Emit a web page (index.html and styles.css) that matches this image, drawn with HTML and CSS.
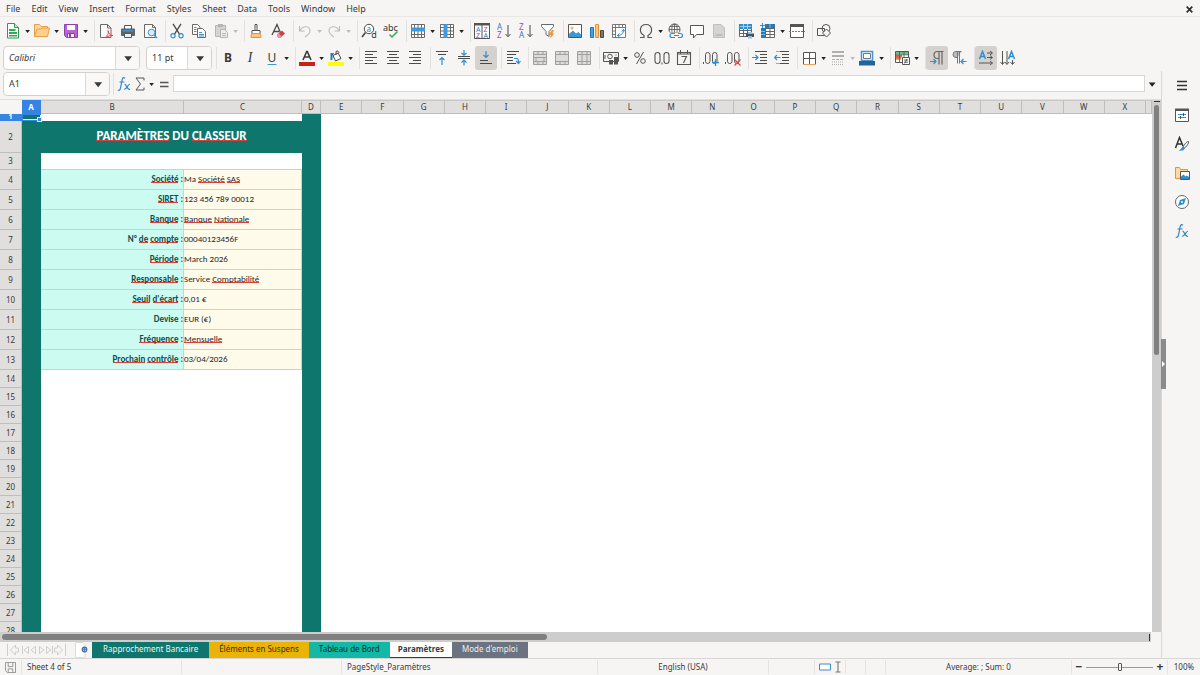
FILE: index.html
```html
<!DOCTYPE html>
<html lang="en">
<head>
<meta charset="utf-8">
<title>Classeur – Paramètres</title>
<meta name="viewport" content="width=device-width, initial-scale=1">
<link rel="stylesheet" href="styles.css">
</head>
<body>
<svg class="sprite" aria-hidden="true">
  <symbol id="drop" viewBox="0 0 7 16"><path d="M1.3 7h4.6L3.6 9.900z" fill="currentColor"/></symbol>
  <symbol id="new" viewBox="0 0 16 16"><path d="M2.500.5h7l4 4v10.500h-11z" fill="#fff" stroke="#2b9a4a"/><path d="M9.500.5v4h4" fill="#c9ecd0" stroke="#2b9a4a"/><path d="M4 6h6.500v2H4zM4 9h8v2H4zM4 12h8v1.500H4z" fill="#35a853"/></symbol>
  <symbol id="open" viewBox="0 0 16 16"><path d="M.5 13.500v-12h5l1.500 2h6.500v3" fill="#fbd9a2" stroke="#e8a04a"/><path d="M.5 13.500l2.500-7.500h4l1-1h7.500l-2 8.500z" fill="#fccf8d" stroke="#e8a04a"/></symbol>
  <symbol id="save" viewBox="0 0 16 16"><path d="M1.500 1.500h13v13h-11l-2-2z" fill="#b765cf" stroke="#913fad"/><path d="M4 2h8v5H4z" fill="#fff"/><path d="M4.500 10.500h7v4h-7z" fill="#fff" stroke="#913fad"/><path d="M6 11h2v3H6z" fill="#913fad"/></symbol>
  <symbol id="pdf" viewBox="0 0 16 16"><path d="M2.500 1.500h7l3.500 3.500v9.500H2.500z" fill="#fafafa" stroke="#6a6a68"/><path d="M9.500 1.500v3.500h3.500" fill="none" stroke="#6a6a68"/><path d="M7.500 14c3-2.500 3-4 2.500-6.500 1 3.500 2 5 5 5-3 0-5 .5-7.500 2" fill="none" stroke="#e0434f"/></symbol>
  <symbol id="print" viewBox="0 0 16 16"><path d="M4.500 2.500h7v4h-7z" fill="#fff" stroke="#555"/><rect x="1" y="5.500" width="14" height="7.500" rx="1" fill="#5c6268"/><path d="M2.500 7h11v1.500h-11z" fill="#4a90c8"/><path d="M4.500 10.500h7v4h-7z" fill="#eee" stroke="#555"/></symbol>
  <symbol id="preview" viewBox="0 0 16 16"><path d="M2.500 1.500h8l3 3v10h-11z" fill="#fafafa" stroke="#6a6a68"/><path d="M10.500 1.500v3h3" fill="none" stroke="#6a6a68"/><circle cx="9.500" cy="9.500" r="3.300" fill="#d7ecfa" stroke="#3d97d3"/><path d="M12 12l3 3" stroke="#3d97d3" stroke-width="1.500"/></symbol>
  <symbol id="cut" viewBox="0 0 16 16"><path d="M4 .8l6.500 10.400M12 .8L5.500 11.200" stroke="#4b4b49" stroke-width="1.300"/><circle cx="4" cy="12.700" r="2.100" fill="none" stroke="#2e8fd0" stroke-width="1.200"/><circle cx="12" cy="12.700" r="2.100" fill="none" stroke="#2e8fd0" stroke-width="1.200"/></symbol>
  <symbol id="copy" viewBox="0 0 16 16"><path d="M1.500 1.500h5l2.500 2.500v7.500H1.500z" fill="#fafafa" stroke="#6a6a68"/><path d="M6.500 5.500h5l3 3v6h-8z" fill="#fafafa" stroke="#6a6a68"/><path d="M3 4.500h2.500M3 6.500h2.500M3 8.500h2.500M8 9.500h3M8 11.500h5M8 13h5" stroke="#3d97d3"/></symbol>
  <symbol id="paste" viewBox="0 0 16 16"><path d="M2.500 2.500h10v11h-10z" fill="#d5d4d2" stroke="#b5b4b2"/><path d="M5 1h5v3H5z" fill="#b5b4b2"/><path d="M7.500 6.500h4l3 3v5h-7z" fill="#eee" stroke="#b5b4b2"/><path d="M9 10.500h4M9 12.500h4" stroke="#b5b4b2"/></symbol>
  <symbol id="brush" viewBox="0 0 16 16"><path d="M7 1.500h2v6H7z" fill="#fff" stroke="#555"/><path d="M4 7.500h8v3H4z" fill="#fff" stroke="#555"/><path d="M3.500 10.500h9l.5 4H3z" fill="#fbc67b" stroke="#e8932c"/></symbol>
  <symbol id="clear" viewBox="0 0 16 16"><path d="M2 12L7 1.500 11 11M4 8.500h5" fill="none" stroke="#4b4b49" stroke-width="1.300"/><path d="M7 11.500l5-4 3 3-5 4.500h-2z" fill="#dd3b4c"/><path d="M7 11.500l2-1.500 2.500 3.500-1.500 1.500H8z" fill="#f4919b"/></symbol>
  <symbol id="undo" viewBox="0 0 16 16"><path d="M2.500 3v5h5M3 7.500c3-5.500 10-4.500 10 .5 0 2.500-2 4-5 6" fill="none" stroke="#bdbcba" stroke-width="1.100"/></symbol>
  <symbol id="redo" viewBox="0 0 16 16"><path d="M13.500 3v5h-5M13 7.500c-3-5.500-10-4.500-10 .5 0 2.500 2 4 5 6" fill="none" stroke="#bdbcba" stroke-width="1.100"/></symbol>
  <symbol id="find" viewBox="0 0 16 16"><circle cx="8" cy="6" r="4.700" fill="#fff" stroke="#4b4b49"/><path d="M4.500 9.500L1 14" stroke="#4b4b49" stroke-width="1.700"/><text x="5.500" y="8.700" font-size="8" fill="#2380c4">a</text><text x="10.200" y="15" font-size="9" fill="#333">d</text></symbol>
  <symbol id="spell" viewBox="0 0 16 16"><text x="0" y="7.500" font-size="9" fill="#333">abc</text><path d="M6.500 11.500l2.500 2.500 5.500-5.500" fill="none" stroke="#2fae56" stroke-width="1.500"/></symbol>
  <symbol id="row" viewBox="0 0 16 16"><path d="M1.500 1.500h13v13h-13zM1.500 11.500h13M4.500 1v14M8 1v14M11.500 1v14" fill="#fff" stroke="#6a6a68"/><path d="M1 4.500h14v4H1z" fill="#3d9ae0"/></symbol>
  <symbol id="col" viewBox="0 0 16 16"><path d="M1.500 1.500h13v13h-13zM11.500 1v14M1 4.500h14M1 8h14M1 11.500h14" fill="#fff" stroke="#6a6a68"/><path d="M4.500 1h4v14h-4z" fill="#3d9ae0"/></symbol>
  <symbol id="sort" viewBox="0 0 16 16"><path d="M.5.5h15v15H.5zM8 1v14" fill="#fff" stroke="#555"/><path d="M0 0h16v2.500H0z" fill="#555"/><g font-size="7"><text x="2" y="8.500" fill="#2380c4">A</text><text x="2" y="15" fill="#a845bd">Z</text><text x="9.500" y="8.500" fill="#a845bd">Z</text><text x="9.500" y="15" fill="#2380c4">A</text></g></symbol>
  <symbol id="az" viewBox="0 0 16 16"><g font-size="8"><text x="1" y="7" fill="#2380c4">A</text><text x="1" y="15" fill="#a845bd">Z</text></g><path d="M12 2v11.500M9.500 11l2.500 2.700 2.500-2.700" fill="none" stroke="#4b4b49"/></symbol>
  <symbol id="za" viewBox="0 0 16 16"><g font-size="8"><text x="1" y="7" fill="#a845bd">Z</text><text x="1" y="15" fill="#2380c4">A</text></g><path d="M12 2v11.500M9.500 11l2.500 2.700 2.500-2.700" fill="none" stroke="#4b4b49"/></symbol>
  <symbol id="filter" viewBox="0 0 16 16"><path d="M1.500 1.500h12v2l-4.500 5v5l-3-2v-3l-4.500-5z" fill="#fff" stroke="#6a6a68"/><path d="M12 7l-3.500 5h2.500l-1.500 4 5-5.500h-2l1.500-3.500z" fill="#f0963a"/></symbol>
  <symbol id="image" viewBox="0 0 16 16"><path d="M1.500 1.500h13v13h-13z" fill="#fff" stroke="#555"/><path d="M2 14v-3l4-3.500 3 3 2.500-1.500 2.500 2.500v2.500z" fill="#3d97d3"/><circle cx="5" cy="5" r="1.500" fill="#f6b35b"/></symbol>
  <symbol id="chart" viewBox="0 0 16 16"><path d="M1.500 4.500h3v10h-3z" fill="#4a9fe0" stroke="#2277bb"/><path d="M6.500 1.500h3v13h-3z" fill="#fcc678" stroke="#e8932c"/><path d="M11.500 7.500h3v7h-3z" fill="#777" stroke="#4b4b49"/></symbol>
  <symbol id="pivot" viewBox="0 0 16 16"><path d="M1.500 1.500h13v13h-13zM1 4.500h14M4.500 1v14M8 1v3M11.500 1v3M1 8h3M1 11.500h3" fill="#fff" stroke="#777"/><path d="M6.500 12.500c4 0 6-2 6-6M8.500 10.500l-2 2 2 1.500M10.800 8.500l1.700-2 1.500 2" fill="none" stroke="#2e8fd0"/></symbol>
  <symbol id="omega" viewBox="0 0 16 16"><path d="M2 14.500h4v-2C.5 9.500 1.500 1.500 8 1.500s7.500 8 2 11v2h4" fill="none" stroke="#555" stroke-width="1.200"/></symbol>
  <symbol id="link" viewBox="0 0 16 16"><circle cx="7.500" cy="6.500" r="5.500" fill="none" stroke="#555"/><path d="M2 6.500h11M3 3.500h9M3 9.500h9M7.500 1v11" stroke="#555" stroke-width=".8"/><ellipse cx="7.500" cy="6.500" rx="2.700" ry="5.500" fill="none" stroke="#555" stroke-width=".8"/><path d="M2 9.500h14v6H2z" fill="#f6f5f4"/><path d="M8 10.500H5a2 2 0 0 0 0 4h3M11 10.500h2.500a2 2 0 0 1 0 4H11M7 12.500h5" fill="none" stroke="#2e8fd0" stroke-width="1.200"/></symbol>
  <symbol id="comment" viewBox="0 0 16 16"><path d="M1.500 2.500h13v9H7.500l-3 3.500v-3.500h-3z" fill="#fff" stroke="#555"/></symbol>
  <symbol id="headfoot" viewBox="0 0 16 16"><path d="M2.500 1.500h7.500l3.500 3.500v9.500h-11z" fill="#d5d4d2" stroke="#c0bfbd"/><path d="M4.500 12h7" stroke="#aaa"/></symbol>
  <symbol id="printarea" viewBox="0 0 16 16"><path d="M1.500 1.500h12v12h-12zM1 7.500h12M1 10.500h12M5.500 4v9M9.500 4v9" fill="#fff" stroke="#666"/><path d="M1 1h13v5H1z" fill="#2e8fd0"/><path d="M2 3.500h11M5.500 1v5M9.500 1v5" stroke="#9fd0f2"/><path d="M8 10.500h8v3.500H8z" fill="#4a5158"/><path d="M10 9h4v2h-4zM10 13h4v2.500h-4z" fill="#8fc3e8"/></symbol>
  <symbol id="freeze" viewBox="0 0 16 16"><path d="M1.500 1.500h13v13h-13zM5.500 1v14M10 1v14M1 5.500h14M1 8.500h14M1 11.500h14" fill="#fff" stroke="#666"/><path d="M5 1h10v4H5zM1 5h4v10H1z" fill="#2479bd"/><path d="M10 1v4M1 8.500h4M1 11.500h4" stroke="#7ebdec"/><path d="M0 0h5v5H0z" fill="#f6f5f4"/><path d="M2.500 0v5M0 2.500h5" stroke="#2e8fd0"/></symbol>
  <symbol id="split" viewBox="0 0 16 16"><path d="M1.500 2.500h13v12h-13z" fill="#fff" stroke="#555"/><path d="M1 1h14v3H1z" fill="#555"/><path d="M0 8.500h16" stroke="#2e8fd0" stroke-dasharray="2 1"/></symbol>
  <symbol id="shapes" viewBox="0 0 16 16"><path d="M1.500 5.500h7v7h-7z" fill="none" stroke="#555"/><circle cx="10" cy="5.500" r="4" fill="none" stroke="#555"/><path d="M10.500 6l4 4-4 4-4-4z" fill="#f6f5f4" stroke="#555"/></symbol>
  <symbol id="fontcolor" viewBox="0 0 16 16"><path d="M4 10L7.700 1.500h.6L12 10M5.500 7h5" fill="none" stroke="#3c3c3a" stroke-width="1.600"/><path d="M0 12h16v4H0z" fill="#c9211e"/></symbol>
  <symbol id="fill" viewBox="0 0 16 16"><path d="M5 5.500l5-2.500 3 5.500-5.500 2.500z" fill="#fff" stroke="#4b4b49"/><path d="M8 5V1.500c1.500-1.200 3 0 3 1.500" fill="none" stroke="#4b4b49"/><path d="M6 3H2.500v7.500l2-1V6z" fill="#2479bd"/><path d="M0 12h16v4H0z" fill="#ff0"/></symbol>
  <symbol id="aleft" viewBox="0 0 16 16"><path d="M2 1.500h12M2 4.500h8M2 7.500h12M2 10.500h8M2 13.500h12" stroke="#4b4b49"/></symbol>
  <symbol id="acenter" viewBox="0 0 16 16"><path d="M2 1.500h12M4 4.500h8M2 7.500h12M4 10.500h8M2 13.500h12" stroke="#4b4b49"/></symbol>
  <symbol id="aright" viewBox="0 0 16 16"><path d="M2 1.500h12M6 4.500h8M2 7.500h12M6 10.500h8M2 13.500h12" stroke="#4b4b49"/></symbol>
  <symbol id="vtop" viewBox="0 0 16 16"><path d="M2 1.500h12M4 4.500h8" stroke="#4b4b49"/><path d="M8 15V7.500M5.500 10L8 7.500l2.500 2.500" fill="none" stroke="#2e8fd0" stroke-width="1.200"/></symbol>
  <symbol id="vmid" viewBox="0 0 16 16"><path d="M2 6.500h12M2 8.500h12" stroke="#4b4b49"/><path d="M8 0v5M5.500 3L8 5.200 10.500 3M8 15.500v-5M5.500 12.500L8 10l2.500 2.500" fill="none" stroke="#2e8fd0" stroke-width="1.200"/></symbol>
  <symbol id="vbot" viewBox="0 0 16 16"><path d="M2 13.500h12M2 10.500h8" stroke="#4b4b49"/><path d="M8 1v6.500M5.500 5L8 7.500 10.500 5" fill="none" stroke="#2e8fd0" stroke-width="1.200"/></symbol>
  <symbol id="wrap" viewBox="0 0 16 16"><path d="M2 1.500h12M2 4.500h9M2 7.500h6M2 10.500h6M2 13.500h9" stroke="#4b4b49"/><path d="M9 8.500h3c1 0 1.500 1 1.500 4M11 11l2.500 2.500L15.500 11" fill="none" stroke="#2e8fd0" stroke-width="1.200"/></symbol>
  <symbol id="merge" viewBox="0 0 16 16"><path d="M1.500 1.500h13v13h-13zM1 4.500h14M1 7.500h14M1 11.500h14M6 1v3M11 1v3M4 8v3M12 8v3M6 12v3M11 12v3" fill="#dddcda" stroke="#a09f9d"/></symbol>
  <symbol id="mergecells" viewBox="0 0 16 16"><path d="M1.500 1.500h13v13h-13zM1 4.500h14M1 11.500h14M6 1v3M11 1v3M6 12v3M11 12v3" fill="#dddcda" stroke="#a09f9d"/></symbol>
  <symbol id="unmerge" viewBox="0 0 16 16"><path d="M1.500 1.500h13v13h-13zM1 4.500h14M1 11.500h14M6 1v14M11 1v14" fill="#dddcda" stroke="#a09f9d"/></symbol>
  <symbol id="currency" viewBox="0 0 16 16"><path d="M.5 2.500h15v9H.5z" fill="none" stroke="#555"/><circle cx="7" cy="6.500" r="2.300" fill="none" stroke="#555"/><path d="M6 10h4v4.500H6zM11 7h4v7.500h-4z" fill="#555"/><path d="M2 5v4M13 4.500v1" stroke="#555"/></symbol>
  <symbol id="percent" viewBox="0 0 16 16"><circle cx="5" cy="5" r="2.300" fill="none" stroke="#555"/><circle cx="11" cy="11" r="2.300" fill="none" stroke="#555"/><path d="M11.500 2L4.500 14" stroke="#555"/></symbol>
  <symbol id="number" viewBox="0 0 16 16"><rect x="1" y="2.500" width="5" height="11" rx="2.500" fill="none" stroke="#555" stroke-width="1.100"/><rect x="10" y="2.500" width="5" height="11" rx="2.500" fill="none" stroke="#555" stroke-width="1.100"/><path d="M8 12.500v2" stroke="#555"/></symbol>
  <symbol id="date" viewBox="0 0 16 16"><path d="M1.500 2.500h13v12h-13zM4.500 0v4M11.500 0v4M1 4h14M5.500 6.500h5l-3 6.500" fill="none" stroke="#555" stroke-width="1.100"/></symbol>
  <symbol id="decadd" viewBox="0 0 16 16"><path d="M.5 12v2" stroke="#555"/><rect x="2.500" y="2.500" width="4.500" height="11" rx="2.200" fill="none" stroke="#555"/><rect x="9.500" y="2.500" width="4.500" height="11" rx="2.200" fill="none" stroke="#555"/><path d="M12.500 9v7M9 12.500h7" stroke="#2e8fd0" stroke-width="1.300"/></symbol>
  <symbol id="decdel" viewBox="0 0 16 16"><path d="M.5 12v2" stroke="#555"/><rect x="2.500" y="2.500" width="4.500" height="11" rx="2.200" fill="none" stroke="#555"/><rect x="9.500" y="2.500" width="4.500" height="11" rx="2.200" fill="none" stroke="#555"/><path d="M9.500 9.500l6 6M15.500 9.500l-6 6" stroke="#e04a3c" stroke-width="1.200"/></symbol>
  <symbol id="indent" viewBox="0 0 16 16"><path d="M3 1.500h12M8 4.500h7M8 7.500h7M8 10.500h7M3 13.500h12" stroke="#4b4b49"/><path d="M0 7.500h6M3.500 5L6 7.500 3.500 10" fill="none" stroke="#2e8fd0" stroke-width="1.200"/></symbol>
  <symbol id="outdent" viewBox="0 0 16 16"><path d="M3 1.500h12M8 4.500h7M8 7.500h7M8 10.500h7M3 13.500h12" stroke="#4b4b49"/><path d="M2 1.500h4M2 13.500h4" stroke="#f0963a"/><path d="M6.500 7.500h-6M3 5L.5 7.500 3 10" fill="none" stroke="#2e8fd0" stroke-width="1.200"/></symbol>
  <symbol id="borders" viewBox="0 0 16 16"><path d="M2.500 2.500h12v12h-12zM8.500 2v12M2 8.500h12" fill="#fff" stroke="#555"/><path d="M2 14.500h13" stroke="#e8a35a"/></symbol>
  <symbol id="bstyle" viewBox="0 0 16 16"><path d="M2 2h12M2 6h12" stroke="#b0afad" stroke-width="2"/><path d="M2 9.500h12" stroke="#b0afad" stroke-dasharray="3 1"/><path d="M2 12h12M2 14.500h12" stroke="#b0afad" stroke-dasharray="1 1"/></symbol>
  <symbol id="bcolor" viewBox="0 0 16 16"><path d="M2.500 1.500h11v9h-11z" fill="#fff" stroke="#3d97d3" stroke-width="1.500"/><path d="M4.500 3.500h7v5h-7z" fill="none" stroke="#777"/><path d="M0 11h16v4.500H0z" fill="#2a6099"/></symbol>
  <symbol id="cond" viewBox="0 0 16 16"><path d="M1.500 1.500h13v11h-13z" fill="#fff" stroke="#555"/><path d="M2 2h12v2.500H2z" fill="#63c07f"/><path d="M2 5h6v2.500H2z" fill="#ef5a50"/><path d="M2 8h5v2H2z" fill="#f5a742"/><path d="M5.500 1v11M10 1v6M1 4.800h13M1 7.800h6" stroke="#555" stroke-width=".8"/><path d="M8.500 7.500h7v7h-7z" fill="#fff" stroke="#555"/><path d="M10 10h4M10 12.200h4M13 8.800l-2.200 4.600" stroke="#555" stroke-width=".9"/></symbol>
  <symbol id="ltr" viewBox="0 0 16 16"><path d="M14.500 1.500H8.500a3.500 3.500 0 0 0 0 7h1.500M10 1.500v13M13 1.500v13" fill="none" stroke="#666" stroke-width="1.200"/><path d="M1 11.500h5.500M4.500 9l2.500 2.500L4.500 14" fill="none" stroke="#2e8fd0" stroke-width="1.200"/></symbol>
  <symbol id="rtl" viewBox="0 0 16 16"><path d="M10.500 1.500H5a3 3 0 0 0 0 6h1.500M6.500 1.500v12M8.500 1.500v12" fill="#bbb" stroke="#777"/><path d="M15.500 11.500H10M12.500 9L10 11.500l2.500 2.500" fill="none" stroke="#2e8fd0" stroke-width="1.200"/></symbol>
  <symbol id="txtlr" viewBox="0 0 16 16"><path d="M1.500 9L4.500 1.500 7.500 9M2.500 6.500h4" fill="none" stroke="#2e8fd0" stroke-width="1.500"/><path d="M9 3h5M12 1l2.500 2L12 5M9 7.500h5M12 5.500l2.500 2-2.500 2M1 13h13.500M12 11l2.500 2-2.500 2" fill="none" stroke="#555"/></symbol>
  <symbol id="txttb" viewBox="0 0 16 16"><path d="M8.500 9l3-7.500 3 7.500M9.500 6.500h4" fill="none" stroke="#2e8fd0" stroke-width="1.500"/><path d="M2.500 1v13M.5 12l2 2.500 2-2.500M7 1v13M5 12l2 2.500L9 12M12.500 10v4M10.500 12l2 2.500 2-2.500" fill="none" stroke="#555"/></symbol>
  <symbol id="fx" viewBox="0 0 16 16"><path d="M9 2.200C6.500.6 6.200 3.200 5.700 6L4.500 12c-.4 2-1.200 2.800-2.700 2M3.500 6h5" fill="none" stroke="#2e86c8" stroke-width="1.200"/><path d="M8.500 8.500c2-1 2.300 6 5.500 4.700M14 8.300c-2-.6-3.500 5.700-6 4.900" fill="none" stroke="#2e86c8" stroke-width="1.200"/></symbol>
  <symbol id="sigma" viewBox="0 0 16 16"><path d="M12 4.500V2H4l4.500 6L4 14h8v-2.500" fill="none" stroke="#555"/></symbol>
  <symbol id="equal" viewBox="0 0 16 16"><path d="M4 6.500h8.500M4 10.500h8.500" stroke="#555" stroke-width="1.400"/></symbol>
  <symbol id="burger" viewBox="0 0 16 16"><path d="M3 3.500h10M3 7.500h10M3 11.500h10" stroke="#333" stroke-width="1.300"/></symbol>
  <symbol id="props" viewBox="0 0 16 16"><path d="M1.500 2.500h13v12h-13z" fill="#fff" stroke="#555"/><path d="M1 1.500h14v2.500H1z" fill="#555"/><path d="M4 7.500h8M4 10.500h8" stroke="#2e8fd0"/><path d="M9.500 6v3M6.500 9v3" stroke="#555"/></symbol>
  <symbol id="styles" viewBox="0 0 16 16"><path d="M1.500 12L5.500 1.500 9 10M3 8h4.500" fill="none" stroke="#333" stroke-width="1.500"/><path d="M14.500 5.500c1 .5-2 5.500-4 6.500l-1.500-1c1.500-3 4.500-6 5.500-5.500z" fill="#fff" stroke="#555"/><path d="M9 10.500l2 1.500c-1 3-4 3-6.500 2.500C7 14 7 12 9 10.500z" fill="#2e8fd0"/></symbol>
  <symbol id="gallery" viewBox="0 0 16 16"><path d="M1.500 13.500v-11h4l1 2h7v9z" fill="#fbd9a2" stroke="#e8932c"/><path d="M6.500 6.500h9v8h-9z" fill="#fff" stroke="#555"/><path d="M7 14v-2.500l2.500-2 2 2 1.500-1 2 1.500v2z" fill="#2e8fd0"/></symbol>
  <symbol id="navigator" viewBox="0 0 16 16"><circle cx="8" cy="8" r="6.500" fill="#fff" stroke="#666"/><path d="M12 4l-2 6-6 2 2-6z" fill="#2e8fd0"/><circle cx="8" cy="8" r="1" fill="#fff"/></symbol>
  <symbol id="nav" viewBox="0 0 60 16"><path d="M1.500 2v12M9.500 3l-5 5 5 5v-3h3V6h-3zM16.500 4v8M22.500 4.500L18 8l4.500 3.500zM29.500 4.500L25 8l4.500 3.500zM33.500 4.500L38 8l-4.500 3.500zM40.500 4.500L45 8l-4.500 3.500zM46.500 4v8M51.500 3l5 5-5 5v-3h-3V6h3zM59.500 2v12" fill="none" stroke="#cfcecc"/></symbol>
  <symbol id="addsheet" viewBox="0 0 16 16"><path d="M1.500.5h7.500l2 2v13h-9.500z" fill="#fff" stroke="#dddcda"/><circle cx="10.500" cy="7.500" r="2.200" fill="#fff" stroke="#4570b0" stroke-width="1.400"/><path d="M9 7.500h3M10.500 6v3" stroke="#4570b0" stroke-width=".8"/></symbol>
  <symbol id="disk" viewBox="0 0 12 12"><path d="M.5.5h11v11h-9l-2-2zM3.500 1v4h5V1M3.500 11V7.500h5V11" fill="none" stroke="#92918f"/></symbol>
  <symbol id="selmode" viewBox="0 0 12 8"><path d="M.5 1h11v6H.5z" fill="#fff" stroke="#3d8ccc"/></symbol>
  <symbol id="caret" viewBox="0 0 6 12"><path d="M.5 1h5M.5 11h5M3 1v10" stroke="#777" stroke-width="1.100"/></symbol>
  <symbol id="close" viewBox="0 0 8 8"><path d="M1.500 1.500l5 5M6.500 1.500l-5 5" stroke="#2c2c2a" stroke-width="1.500"/></symbol>
</svg>

<nav class="menubar" aria-label="Menu">
  <button>File</button><button>Edit</button><button>View</button><button>Insert</button><button>Format</button><button>Styles</button><button>Sheet</button><button>Data</button><button>Tools</button><button>Window</button><button>Help</button>
  <button class="close" aria-label="Close document"><svg><use href="#close"/></svg></button>
</nav>

<div class="toolbar standard" role="toolbar" aria-label="Standard">
  <button class="tool" aria-label="New"><svg><use href="#new"/></svg></button><button class="drop" aria-label="New options"><svg><use href="#drop"/></svg></button>
  <button class="tool" aria-label="Open"><svg><use href="#open"/></svg></button><button class="drop" aria-label="Recent files"><svg><use href="#drop"/></svg></button>
  <button class="tool" aria-label="Save"><svg><use href="#save"/></svg></button><button class="drop" aria-label="Save options"><svg><use href="#drop"/></svg></button>
  <span class="sep"></span>
  <button class="tool" aria-label="Export as PDF"><svg><use href="#pdf"/></svg></button>
  <button class="tool" aria-label="Print"><svg><use href="#print"/></svg></button>
  <button class="tool" aria-label="Print preview"><svg><use href="#preview"/></svg></button>
  <span class="sep"></span>
  <button class="tool" aria-label="Cut"><svg><use href="#cut"/></svg></button>
  <button class="tool" aria-label="Copy"><svg><use href="#copy"/></svg></button>
  <button class="tool" aria-label="Paste" disabled><svg><use href="#paste"/></svg></button><button class="drop" aria-label="Paste options" disabled><svg><use href="#drop"/></svg></button>
  <span class="sep"></span>
  <button class="tool" aria-label="Clone formatting"><svg><use href="#brush"/></svg></button>
  <button class="tool" aria-label="Clear formatting"><svg><use href="#clear"/></svg></button>
  <span class="sep"></span>
  <button class="tool" aria-label="Undo" disabled><svg><use href="#undo"/></svg></button><button class="drop" aria-label="Undo list" disabled><svg><use href="#drop"/></svg></button>
  <button class="tool" aria-label="Redo" disabled><svg><use href="#redo"/></svg></button><button class="drop" aria-label="Redo list" disabled><svg><use href="#drop"/></svg></button>
  <span class="sep"></span>
  <button class="tool" aria-label="Find and replace"><svg><use href="#find"/></svg></button>
  <button class="tool" aria-label="Spelling"><svg><use href="#spell"/></svg></button>
  <span class="sep"></span>
  <button class="tool" aria-label="Row"><svg><use href="#row"/></svg></button><button class="drop" aria-label="Row options"><svg><use href="#drop"/></svg></button>
  <button class="tool" aria-label="Column"><svg><use href="#col"/></svg></button><button class="drop" aria-label="Column options"><svg><use href="#drop"/></svg></button>
  <span class="sep"></span>
  <button class="tool" aria-label="Sort"><svg><use href="#sort"/></svg></button>
  <button class="tool" aria-label="Sort ascending"><svg><use href="#az"/></svg></button>
  <button class="tool" aria-label="Sort descending"><svg><use href="#za"/></svg></button>
  <button class="tool" aria-label="AutoFilter"><svg><use href="#filter"/></svg></button>
  <span class="sep"></span>
  <button class="tool" aria-label="Insert image"><svg><use href="#image"/></svg></button>
  <button class="tool" aria-label="Insert chart"><svg><use href="#chart"/></svg></button>
  <button class="tool" aria-label="Pivot table"><svg><use href="#pivot"/></svg></button>
  <span class="sep"></span>
  <button class="tool" aria-label="Special character"><svg><use href="#omega"/></svg></button><button class="drop" aria-label="More characters"><svg><use href="#drop"/></svg></button>
  <button class="tool" aria-label="Hyperlink"><svg><use href="#link"/></svg></button>
  <button class="tool" aria-label="Comment"><svg><use href="#comment"/></svg></button>
  <button class="tool" aria-label="Headers and footers" disabled><svg><use href="#headfoot"/></svg></button>
  <span class="sep"></span>
  <button class="tool" aria-label="Print area"><svg><use href="#printarea"/></svg></button>
  <button class="tool" aria-label="Freeze"><svg><use href="#freeze"/></svg></button><button class="drop" aria-label="Freeze options"><svg><use href="#drop"/></svg></button>
  <button class="tool" aria-label="Split window"><svg><use href="#split"/></svg></button>
  <span class="sep"></span>
  <button class="tool" aria-label="Draw functions"><svg><use href="#shapes"/></svg></button>
</div>

<div class="toolbar formatting" role="toolbar" aria-label="Formatting">
  <div class="combo font-name"><input class="italic" aria-label="Font name" value="Calibri"><button aria-label="Font list"><svg><use href="#drop"/></svg></button></div>
  <div class="combo font-size"><input aria-label="Font size" value="11 pt"><button aria-label="Size list"><svg><use href="#drop"/></svg></button></div>
  <span class="sep"></span>
  <button class="tool glyph bold" aria-label="Bold">B</button>
  <button class="tool glyph slant" aria-label="Italic">I</button>
  <button class="tool glyph under" aria-label="Underline">U</button><button class="drop" aria-label="Underline style"><svg><use href="#drop"/></svg></button>
  <span class="sep"></span>
  <button class="tool" aria-label="Font colour"><svg><use href="#fontcolor"/></svg></button><button class="drop" aria-label="Font colours"><svg><use href="#drop"/></svg></button>
  <button class="tool" aria-label="Background colour"><svg><use href="#fill"/></svg></button><button class="drop" aria-label="Background colours"><svg><use href="#drop"/></svg></button>
  <span class="sep"></span>
  <button class="tool" aria-label="Align left"><svg><use href="#aleft"/></svg></button>
  <button class="tool" aria-label="Align centre"><svg><use href="#acenter"/></svg></button>
  <button class="tool" aria-label="Align right"><svg><use href="#aright"/></svg></button>
  <span class="sep"></span>
  <button class="tool" aria-label="Align top"><svg><use href="#vtop"/></svg></button>
  <button class="tool" aria-label="Centre vertically"><svg><use href="#vmid"/></svg></button>
  <button class="tool active" aria-label="Align bottom" aria-pressed="true"><svg><use href="#vbot"/></svg></button>
  <span class="sep"></span>
  <button class="tool" aria-label="Wrap text"><svg><use href="#wrap"/></svg></button>
  <span class="sep"></span>
  <button class="tool" aria-label="Merge and centre" disabled><svg><use href="#merge"/></svg></button>
  <button class="tool" aria-label="Merge cells" disabled><svg><use href="#mergecells"/></svg></button>
  <button class="tool" aria-label="Unmerge cells" disabled><svg><use href="#unmerge"/></svg></button>
  <span class="sep"></span>
  <button class="tool" aria-label="Currency"><svg><use href="#currency"/></svg></button><button class="drop" aria-label="Currencies"><svg><use href="#drop"/></svg></button>
  <button class="tool" aria-label="Percent"><svg><use href="#percent"/></svg></button>
  <button class="tool" aria-label="Number"><svg><use href="#number"/></svg></button>
  <button class="tool" aria-label="Date"><svg><use href="#date"/></svg></button>
  <span class="sep"></span>
  <button class="tool" aria-label="Add decimal place"><svg><use href="#decadd"/></svg></button>
  <button class="tool" aria-label="Delete decimal place"><svg><use href="#decdel"/></svg></button>
  <span class="sep"></span>
  <button class="tool" aria-label="Increase indent"><svg><use href="#indent"/></svg></button>
  <button class="tool" aria-label="Decrease indent"><svg><use href="#outdent"/></svg></button>
  <span class="sep"></span>
  <button class="tool" aria-label="Borders"><svg><use href="#borders"/></svg></button><button class="drop" aria-label="Border list"><svg><use href="#drop"/></svg></button>
  <button class="tool" aria-label="Border style" disabled><svg><use href="#bstyle"/></svg></button><button class="drop" aria-label="Border styles" disabled><svg><use href="#drop"/></svg></button>
  <button class="tool" aria-label="Border colour"><svg><use href="#bcolor"/></svg></button><button class="drop" aria-label="Border colours"><svg><use href="#drop"/></svg></button>
  <span class="sep"></span>
  <button class="tool" aria-label="Conditional formatting"><svg><use href="#cond"/></svg></button><button class="drop" aria-label="Conditions"><svg><use href="#drop"/></svg></button>
  <span class="sep"></span>
  <button class="tool active" aria-label="Left to right" aria-pressed="true"><svg><use href="#ltr"/></svg></button>
  <button class="tool" aria-label="Right to left"><svg><use href="#rtl"/></svg></button>
  <span class="sep"></span>
  <button class="tool active" aria-label="Horizontal text" aria-pressed="true"><svg><use href="#txtlr"/></svg></button>
  <button class="tool" aria-label="Vertical text"><svg><use href="#txttb"/></svg></button>
</div>

<div class="work">
  <main class="editor">
    <div class="formula">
      <div class="combo name-box"><input aria-label="Name box" value="A1"><button aria-label="Named ranges"><svg><use href="#drop"/></svg></button></div>
      <span class="sep"></span>
      <button class="mini" aria-label="Function wizard"><svg><use href="#fx"/></svg></button>
      <button class="mini" aria-label="Select function"><svg><use href="#sigma"/></svg></button><button class="drop" aria-label="Functions"><svg><use href="#drop"/></svg></button>
      <button class="mini" aria-label="Formula"><svg><use href="#equal"/></svg></button>
      <input class="formula-input" aria-label="Formula input">
      <button class="expand" aria-label="Expand formula bar"><svg><use href="#drop"/></svg></button>
    </div>
    <div class="grid-area">
      <div class="cells">
        <table class="sheet">
          <colgroup><col class="c-head"><col class="c-edge"><col class="c-label"><col class="c-value"><col class="c-edge"><col span="20"><col class="c-last"></colgroup>
          <thead>
            <tr><th class="corner"></th><th class="sel">A</th><th>B</th><th>C</th><th>D</th><th>E</th><th>F</th><th>G</th><th>H</th><th>I</th><th>J</th><th>K</th><th>L</th><th>M</th><th>N</th><th>O</th><th>P</th><th>Q</th><th>R</th><th>S</th><th>T</th><th>U</th><th>V</th><th>W</th><th>X</th><th></th></tr>
          </thead>
          <tbody>
            <tr class="r-top"><th class="sel">1</th><td class="cursor"><span class="handle"></span></td><td></td><td></td><td class="teal"></td><td colspan="21"></td></tr>
            <tr class="r-title"><th>2</th><td class="teal"></td><td class="teal title" colspan="2"><span class="typo">PARAMÈTRES</span> DU <span class="typo">CLASSEUR</span></td><td class="teal"></td><td colspan="21"></td></tr>
            <tr class="r-gap"><th>3</th><td class="teal"></td><td class="line" colspan="2"></td><td class="teal"></td><td colspan="21"></td></tr>
            <tr class="r-data"><th>4</th><td class="teal"></td><td class="label"><span class="typo">Société</span> :</td><td class="value">Ma <span class="typo">Société</span> <span class="typo">SAS</span></td><td class="teal"></td><td colspan="21"></td></tr>
            <tr class="r-data"><th>5</th><td class="teal"></td><td class="label"><span class="typo">SIRET</span> :</td><td class="value">123 456 789 00012</td><td class="teal"></td><td colspan="21"></td></tr>
            <tr class="r-data"><th>6</th><td class="teal"></td><td class="label"><span class="typo">Banque</span> :</td><td class="value"><span class="typo">Banque</span> <span class="typo">Nationale</span></td><td class="teal"></td><td colspan="21"></td></tr>
            <tr class="r-data"><th>7</th><td class="teal"></td><td class="label">N° <span class="typo">de</span> <span class="typo">compte</span> :</td><td class="value">00040123456F</td><td class="teal"></td><td colspan="21"></td></tr>
            <tr class="r-data"><th>8</th><td class="teal"></td><td class="label"><span class="typo">Période</span> :</td><td class="value">March 2026</td><td class="teal"></td><td colspan="21"></td></tr>
            <tr class="r-data"><th>9</th><td class="teal"></td><td class="label"><span class="typo">Responsable</span> :</td><td class="value">Service <span class="typo">Comptabilité</span></td><td class="teal"></td><td colspan="21"></td></tr>
            <tr class="r-data"><th>10</th><td class="teal"></td><td class="label"><span class="typo">Seuil</span> <span class="typo">d'écart</span> :</td><td class="value">0,01 €</td><td class="teal"></td><td colspan="21"></td></tr>
            <tr class="r-data"><th>11</th><td class="teal"></td><td class="label">Devise :</td><td class="value">EUR (€)</td><td class="teal"></td><td colspan="21"></td></tr>
            <tr class="r-data"><th>12</th><td class="teal"></td><td class="label"><span class="typo">Fréquence</span> :</td><td class="value"><span class="typo">Mensuelle</span></td><td class="teal"></td><td colspan="21"></td></tr>
            <tr class="r-data"><th>13</th><td class="teal"></td><td class="label"><span class="typo">Prochain</span> <span class="typo">contrôle</span> :</td><td class="value">03/04/2026</td><td class="teal"></td><td colspan="21"></td></tr>
            <tr><th>14</th><td class="teal"></td><td colspan="2"></td><td class="teal"></td><td colspan="21"></td></tr>
            <tr><th>15</th><td class="teal"></td><td colspan="2"></td><td class="teal"></td><td colspan="21"></td></tr>
            <tr><th>16</th><td class="teal"></td><td colspan="2"></td><td class="teal"></td><td colspan="21"></td></tr>
            <tr><th>17</th><td class="teal"></td><td colspan="2"></td><td class="teal"></td><td colspan="21"></td></tr>
            <tr><th>18</th><td class="teal"></td><td colspan="2"></td><td class="teal"></td><td colspan="21"></td></tr>
            <tr><th>19</th><td class="teal"></td><td colspan="2"></td><td class="teal"></td><td colspan="21"></td></tr>
            <tr><th>20</th><td class="teal"></td><td colspan="2"></td><td class="teal"></td><td colspan="21"></td></tr>
            <tr><th>21</th><td class="teal"></td><td colspan="2"></td><td class="teal"></td><td colspan="21"></td></tr>
            <tr><th>22</th><td class="teal"></td><td colspan="2"></td><td class="teal"></td><td colspan="21"></td></tr>
            <tr><th>23</th><td class="teal"></td><td colspan="2"></td><td class="teal"></td><td colspan="21"></td></tr>
            <tr><th>24</th><td class="teal"></td><td colspan="2"></td><td class="teal"></td><td colspan="21"></td></tr>
            <tr><th>25</th><td class="teal"></td><td colspan="2"></td><td class="teal"></td><td colspan="21"></td></tr>
            <tr><th>26</th><td class="teal"></td><td colspan="2"></td><td class="teal"></td><td colspan="21"></td></tr>
            <tr><th>27</th><td class="teal"></td><td colspan="2"></td><td class="teal"></td><td colspan="21"></td></tr>
            <tr><th>28</th><td class="teal"></td><td colspan="2"></td><td class="teal"></td><td colspan="21"></td></tr>
          </tbody>
        </table>
      </div>
      <div class="vscroll"><span class="tick"></span><span class="thumb"></span></div>
    </div>
    <div class="hscroll"><span class="thumb"></span><span class="tick"></span></div>
    <div class="tabs">
      <button class="nav-arrows" aria-label="Scroll sheets"><svg><use href="#nav"/></svg></button>
      <button class="add" aria-label="Add sheet"><svg><use href="#addsheet"/></svg></button>
      <button class="tab tab-teal">Rapprochement Bancaire</button>
      <button class="tab tab-gold">Éléments en Suspens</button>
      <button class="tab tab-aqua">Tableau de Bord</button>
      <button class="tab tab-current" aria-current="true">Paramètres</button>
      <button class="tab tab-slate">Mode d'emploi</button>
    </div>
  </main>
  <aside class="sidebar">
    <button aria-label="Sidebar settings"><svg><use href="#burger"/></svg></button>
    <button aria-label="Properties"><svg><use href="#props"/></svg></button>
    <button aria-label="Styles"><svg><use href="#styles"/></svg></button>
    <button aria-label="Gallery"><svg><use href="#gallery"/></svg></button>
    <button aria-label="Navigator"><svg><use href="#navigator"/></svg></button>
    <button aria-label="Functions"><svg><use href="#fx"/></svg></button>
    <span class="grip"></span>
  </aside>
</div>

<footer class="status">
  <span class="mid"><svg class="disk"><use href="#disk"/></svg></span>
  <span class="first">Sheet 4 of 5</span>
  <span></span>
  <span class="first">PageStyle_Paramètres</span>
  <span class="mid">English (USA)</span>
  <span></span>
  <span class="mid modes"><svg class="selmode"><use href="#selmode"/></svg><svg class="caret"><use href="#caret"/></svg></span>
  <span></span>
  <span></span>
  <span class="mid">Average: ; Sum: 0</span>
  <span class="mid zoom"><button aria-label="Zoom out">−</button><input type="range" aria-label="Zoom" min="0" max="100" value="50"><button aria-label="Zoom in">+</button></span>
  <span class="mid">100%</span>
</footer>
</body>
</html>
```

FILE: styles.css
```css
* { box-sizing: border-box; }

body {
  margin: 0;
  height: 100vh;
  display: flex;
  flex-direction: column;
  overflow: hidden;
  background: #f6f5f4;
  color: #3a3a38;
  font: 9px/12px "Noto Sans", "Open Sans", sans-serif;
}

button, input { font: inherit; color: inherit; margin: 0; padding: 0; border: 0; background: none; }
button { display: flex; align-items: center; justify-content: center; flex: none; }
svg { display: block; width: 16px; height: 16px; flex: none; }
.sprite { display: none; }

/* Menu bar */
.menubar { display: flex; align-items: center; gap: 11px; height: 17px; flex: none; padding: 2px 6px 0; border-bottom: 1px solid #e9e8e6; }
.menubar .close { margin-left: auto; }
.menubar .close svg { width: 9px; height: 9px; }

/* Toolbars */
.toolbar { display: flex; align-items: center; flex: none; height: 27px; padding-left: 2px; }
.formatting { padding-left: 3px; }
.tool { width: 22px; height: 24px; border-radius: 3px; }
.tool.active { background: #d5d2ce; }
.drop { width: 7px; height: 24px; color: #222; }
.drop svg { width: 7px; }
.drop:disabled { color: #bdbcba; }
.sep { width: 5px; height: 22px; flex: none; border-right: 1px solid #e3e1df; }
.drop + .sep { width: 6px; }
.glyph { font-size: 12px; line-height: 16px; }
.bold { font-weight: 700; }
.slant { font-family: "Liberation Serif", serif; font-style: italic; font-size: 14px; }
.under { text-decoration: underline #3d97d3 1px; text-underline-offset: 2px; }

.combo { display: flex; flex: none; height: 24px; border: 1px solid #d3d0cd; border-radius: 4px; background: #fff; overflow: hidden; }
.combo input { flex: 1; min-width: 0; padding-left: 5px; }
.combo button { width: 24px; border-left: 1px solid #dcdad7; background: #f9f8f7; }
.combo svg { width: 12px; height: 28px; }
.italic { font-style: italic; }
.font-name { width: 137px; margin-right: 6px; }
.font-size { width: 66px; }
.name-box { width: 107px; }

/* Work area */
.work { display: flex; flex: 1; min-height: 0; }
.editor { display: flex; flex-direction: column; flex: 1; min-width: 0; }
.formula { display: flex; align-items: center; flex: none; height: 29px; padding: 0 3px 3px; border-bottom: 1px solid #e0dfdd; }
.mini { width: 16px; height: 20px; }
.formula .sep { width: 4px; }
.formula .sep + .mini { margin-left: 2px; }
.formula .drop + .mini { margin: 0 1px; }
.formula-input { flex: 1; min-width: 0; height: 17px; background: #fff; border: 1px solid #d9d7d5; }
.expand { width: 13px; }
.expand svg { width: 12px; height: 24px; color: #222; }

.grid-area { display: flex; flex: 1; min-height: 0; }
.cells { flex: 1; min-width: 0; overflow: hidden; background: #fff; }
.sheet { width: 100%; table-layout: fixed; border-collapse: separate; border-spacing: 0; }
.c-head { width: 22px; }
.c-edge { width: 19px; }
.c-label { width: 143px; }
.c-value { width: 118px; }
.c-last { width: 6px; }
.sheet th, .sheet td { height: 18px; padding: 0; }
.sheet th { background: #e0dfde; border: solid #bfbebd; border-width: 0 1px 1px 0; font-weight: 400; font-size: 8px; line-height: 10px; text-align: center; }
.sheet thead th { height: 14px; border-top: 1px solid #c9c8c6; }
.sheet thead .corner { background: #f6f5f4; border-color: #f6f5f4; }
.sheet .sel { background: #3584e4; border-color: #3584e4; color: #fff; font-weight: 700; }
.sheet .r-top th, .sheet .r-top td { height: 7px; font-size: 7px; line-height: 6px; }
.sheet .r-title th, .sheet .r-title td { height: 32px; }
.sheet .r-gap th, .sheet .r-gap td { height: 17px; }
.sheet .r-data th, .sheet .r-data td { height: 20px; }
.sheet .teal { background: #0f766e; }
.sheet .line { border-bottom: 1px solid #cfcfcf; }
.sheet .cursor { position: relative; background: #0f766e; border: solid #3584e4; border-width: 1px 0 1px 1px; box-shadow: inset 0 -1px #fff, inset -1px 0 #fff; }
.handle { position: absolute; right: -1px; bottom: -2px; width: 5px; height: 5px; background: #3584e4; border: 1px solid #d8e7fa; }
.sheet .title { padding-bottom: 3px; text-align: center; color: #fff; font: 700 13px/16px Carlito, Lato, sans-serif; }
.label, .value { border: solid #cfcfcf; border-width: 0 1px 1px 0; font: 9px/12px Carlito, Lato, sans-serif; white-space: nowrap; }
.label { background: #ccfbf1; color: #134e4a; font-weight: 700; text-align: right; }
.value { background: #fffbeb; color: #1f1f1f; }
.sheet .label, .sheet .value { padding-bottom: 1px; }
.typo { background: linear-gradient(#d8403a, #d8403a) 0 90% / 100% 1px no-repeat; }

/* Scroll bars */
.vscroll { display: flex; flex-direction: column; align-items: center; flex: none; width: 9px; padding-top: 1px; background: #cdcdcd; }
.vscroll .tick { width: 6px; height: 1px; background: #333; }
.vscroll .thumb { width: 5px; height: 47%; margin-top: 3px; border-radius: 3px; background: #808080; }
.hscroll { display: flex; align-items: center; flex: none; height: 10px; margin-right: 10px; padding: 0 1px 0 2px; background: #cdcdcd; }
.hscroll .thumb { width: 47.500%; height: 6px; border-radius: 3px; background: #808080; }
.hscroll .tick { width: 1px; height: 7px; margin-left: auto; background: #333; }

/* Sheet tabs */
.tabs { display: flex; flex: none; height: 16px; font-size: 8px; }
.nav-arrows { margin-left: 6px; }
.nav-arrows svg { width: 60px; }
.add { margin: 0 2px 0 8px; }
.tab { height: 16px; padding: 0 10px 2px; }
.tab-teal { padding: 0 11px 2px; background: #0f766e; color: #e8f5f3; }
.tab-gold { background: #eab308; color: #3b2d02; }
.tab-aqua { background: #14b8a6; color: #032e29; }
.tab-current { padding: 0 8px 1px; background: #fff; border-bottom: 1px solid #0f4f4a; font-weight: 700; }
.tab-slate { background: #6b7280; color: #edeef0; }

/* Side bar */
.sidebar { position: relative; display: flex; flex-direction: column; align-items: center; flex: none; width: 39px; border-left: 1px solid #dad8d6; }
.sidebar button { width: 29px; height: 29px; margin-left: 1px; }
.grip { position: absolute; left: -1px; top: 268px; width: 5px; height: 50px; background: #8b8b8b; }
.grip::after { content: ""; position: absolute; left: 1px; top: 22px; border: solid transparent; border-width: 3px 0 3px 3px; border-left-color: #fff; }

/* Status bar */
.status {
  display: grid;
  grid-template-columns: 22px 160fr 160fr 256fr 171fr 46fr 31px 20px 20px 186fr 96px 32px;
  flex: none;
  height: 17px;
  border-top: 1px solid #d9d7d5;
  font-size: 8px;
}
.status > span { display: flex; align-items: center; min-width: 0; margin: 1px 0; border-right: 1px solid #e6e4e2; white-space: nowrap; }
.status > span:last-child { border: 0; }
.status .first { padding-left: 5px; }
.status .mid { justify-content: center; }
.disk { width: 11px; height: 11px; }
.modes { gap: 4px; }
.selmode { width: 12px; height: 8px; }
.caret { width: 6px; height: 12px; }
.zoom button { width: 14px; font-size: 12px; font-weight: 700; }
.zoom input { appearance: none; flex: 1; min-width: 0; height: 10px; background: linear-gradient(#999, #999) center / 100% 1px no-repeat; }
.zoom input::-webkit-slider-thumb { appearance: none; width: 4px; height: 8px; border: 1px solid #555; border-radius: 1px; background: #f6f5f4; }
```
